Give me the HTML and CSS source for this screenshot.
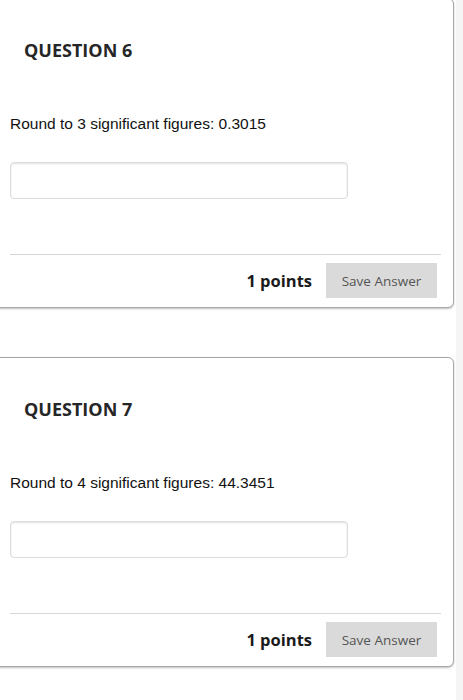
FILE: index.html
```html
<!DOCTYPE html>
<html>
<head>
<meta charset="utf-8">
<link rel="stylesheet" href="styles.css">
</head>
<body>
<div class="page">
  <main class="main">
    <section class="card">
      <h2 class="q-title">QUESTION 6</h2>
      <p class="q-text">Round to 3 significant figures: 0.3015</p>
      <div class="answer"></div>
      <div class="rule"></div>
      <div class="footer">
        <span class="points">1 points</span>
        <span class="save">Save Answer</span>
      </div>
    </section>
    <section class="card">
      <h2 class="q-title">QUESTION 7</h2>
      <p class="q-text">Round to 4 significant figures: 44.3451</p>
      <div class="answer"></div>
      <div class="rule"></div>
      <div class="footer">
        <span class="points">1 points</span>
        <span class="save">Save Answer</span>
      </div>
    </section>
  </main>
  <aside class="strip"></aside>
</div>
</body>
</html>
```
FILE: styles.css
```css
html, body {
  margin: 0;
  padding: 0;
  background: #ffffff;
}
.page {
  display: flex;
  min-height: 100vh;
  overflow: hidden;
}
.main {
  width: 456px;
  flex: none;
  background: #ffffff;
  display: flex;
  flex-direction: column;
  gap: 49px;
  margin-top: -2px;
}
.strip {
  flex: 1;
  background: #f5f5f5;
}
.card {
  margin-left: -7px;
  margin-right: 2px;
  height: 310px;
  box-sizing: border-box;
  border: 1px solid #a8a8a8;
  border-radius: 6px;
  box-shadow: 0 1px 2px rgba(0,0,0,0.25);
  padding: 39px 12px 9px 16px;
  display: flex;
  flex-direction: column;
  background: #fff;
}
.q-title {
  margin: 0 0 0 14px;
  font-family: "Open Sans", sans-serif;
  font-weight: 700;
  font-size: 18px;
  line-height: 24px;
  color: #262626;
}
.q-text {
  margin: 53px 0 0 0;
  font-family: "Liberation Sans", Arial, sans-serif;
  font-size: 15.5px;
  line-height: 18px;
  color: #111;
}
.answer {
  margin-top: 29px;
  width: 338px;
  height: 37px;
  box-sizing: border-box;
  border: 1px solid #dcdcdc;
  border-radius: 4px;
  box-shadow: inset 0 1px 2px rgba(0,0,0,0.12);
}
.rule {
  margin-top: 55px;
  height: 1px;
  background: #d6d6d6;
}
.footer {
  margin-top: 8px;
  display: flex;
  justify-content: flex-end;
  align-items: center;
  gap: 14px;
  padding-right: 4px;
}
.points {
  font-family: "Open Sans", sans-serif;
  font-weight: 700;
  font-size: 16.5px;
  color: #1a1a1a;
}
.save {
  width: 111px;
  height: 35px;
  display: flex;
  align-items: center;
  justify-content: center;
  background: #dadada;
  font-family: "Open Sans", sans-serif;
  font-size: 13.5px;
  color: #555;
}
```
